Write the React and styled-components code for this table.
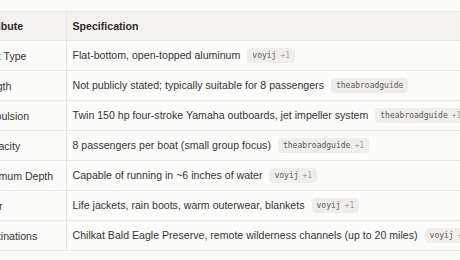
import React from 'react';
import styled, { createGlobalStyle } from 'styled-components';

const GlobalStyle = createGlobalStyle`
    html, body {
        margin: 0;
        padding: 0;
        background: #fcfcfa;
    }
    body {
        font-family: "Liberation Sans", Arial, sans-serif;
        color: #2e2e2c;
    }
`

const Viewport = styled.div`
    width: 460px;
    height: 260px;
    overflow: hidden;
    padding-top: 11px;
    box-sizing: border-box;
`

const Table = styled.table`
    width: max-content;
    margin-left: -27px;
    border-collapse: collapse;
    white-space: nowrap;
    font-size: 10.6px;
    border-top: 1px solid #e7e6e1;
`

const HeadCell = styled.th`
    background: #f3f2ee;
    font-weight: 700;
    text-align: left;
    height: 29px;
    padding: 0 6px;
    color: #2b2b29;
    border-bottom: 1px solid #e7e6e1;
    border-right: ${props => props.divider ? '1px solid #e7e6e1' : 'none'};
    width: ${props => props.$width || 'auto'};
    box-sizing: border-box;
`

const Cell = styled.td`
    height: 29px;
    padding: 0 6px;
    border-bottom: 1px solid #e7e6e1;
    border-right: ${props => props.divider ? '1px solid #e7e6e1' : 'none'};
    color: #353533;
`

const Badge = styled.span`
    display: inline-flex;
    align-items: center;
    gap: 4px;
    margin-left: 7px;
    height: 15px;
    padding: 0 5px;
    border-radius: 4px;
    background: #efeeea;
    font-family: "DejaVu Sans Mono", "Liberation Mono", monospace;
    font-size: 8px;
    color: #595955;
    vertical-align: 1px;
`

const Extra = styled.span`
    color: #a4a39e;
`

const rows = [
    ['Boat Type', 'Flat-bottom, open-topped aluminum', 'voyij', true],
    ['Length', 'Not publicly stated; typically suitable for 8 passengers', 'theabroadguide', false],
    ['Propulsion', 'Twin 150 hp four-stroke Yamaha outboards, jet impeller system', 'theabroadguide', true],
    ['Capacity', '8 passengers per boat (small group focus)', 'theabroadguide', true],
    ['Minimum Depth', 'Capable of running in ~6 inches of water', 'voyij', true],
    ['Gear', 'Life jackets, rain boots, warm outerwear, blankets', 'voyij', true],
    ['Destinations', 'Chilkat Bald Eagle Preserve, remote wilderness channels (up to 20 miles)', 'voyij', true],
]

function App() {
    return (
        <>
            <GlobalStyle />
            <Viewport>
                <Table>
                    <thead>
                        <tr>
                            <HeadCell divider $width="93px">Attribute</HeadCell>
                            <HeadCell>Specification</HeadCell>
                        </tr>
                    </thead>
                    <tbody>
                        {rows.map(([attr, spec, source, more]) => (
                            <tr key={attr}>
                                <Cell divider>{attr}</Cell>
                                <Cell>
                                    {spec}
                                    <Badge>
                                        {source}
                                        {more && <Extra>+1</Extra>}
                                    </Badge>
                                </Cell>
                            </tr>
                        ))}
                    </tbody>
                </Table>
            </Viewport>
        </>
    )
}

export default App;
